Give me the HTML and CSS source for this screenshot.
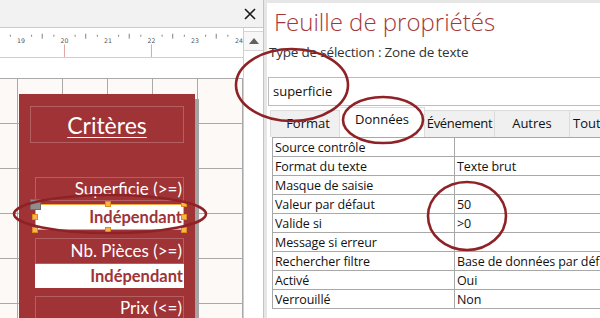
FILE: index.html
```html
<!DOCTYPE html>
<html lang="fr">
<head>
<meta charset="utf-8">
<title>Feuille de propriétés</title>
<link rel="stylesheet" href="styles.css">
</head>
<body>
<div class="app">
  <section class="designer">
    <div class="topbar">
      <svg class="close" width="12" height="12" viewBox="0 0 12 12"><path d="M1 1L11 11M11 1L1 11" stroke="#1a1a1a" stroke-width="1.6"/></svg>
    </div>
    <div class="design-body">
      <div class="canvas-col">
        <svg class="ruler" width="243" height="30" viewBox="0 0 243 30">
          <g stroke="#7a7a7a" stroke-width="1">
            <line x1="6.5" y1="7" x2="6.5" y2="9"/>
            <line x1="28.5" y1="7" x2="28.5" y2="9"/><line x1="39.5" y1="6" x2="39.5" y2="11"/><line x1="51.5" y1="7" x2="51.5" y2="9"/>
            <line x1="73.5" y1="7" x2="73.5" y2="9"/><line x1="84.5" y1="6" x2="84.5" y2="11"/><line x1="96.5" y1="7" x2="96.5" y2="9"/>
            <line x1="118.5" y1="7" x2="118.5" y2="9"/><line x1="129.5" y1="6" x2="129.5" y2="11"/><line x1="141.5" y1="7" x2="141.5" y2="9"/>
            <line x1="163.5" y1="7" x2="163.5" y2="9"/><line x1="174.5" y1="6" x2="174.5" y2="11"/><line x1="186.5" y1="7" x2="186.5" y2="9"/>
            <line x1="208.5" y1="7" x2="208.5" y2="9"/><line x1="219.5" y1="6" x2="219.5" y2="11"/><line x1="231.5" y1="7" x2="231.5" y2="9"/>
          </g>
          <g class="ruler-num" fill="#555" font-size="6.5" text-anchor="middle">
            <text x="17.5" y="15">19</text>
            <text x="62.5" y="15">20</text>
            <text x="107.5" y="15">21</text>
            <text x="152.5" y="15">22</text>
            <text x="197.5" y="15">23</text>
            <text x="243" y="15">24</text>
          </g>
          <g stroke="#e0a0a0" stroke-width="1">
            <line x1="62.5" y1="17" x2="62.5" y2="30"/>
            <line x1="152.5" y1="17" x2="152.5" y2="30"/>
          </g>
        </svg>
        <div class="band"></div>
        <div class="grid">
          <div class="form">
            <div class="title-box"><span class="title-text">Critères</span></div>
            <div class="lbl lbl-first">Superficie (&gt;=)</div>
            <div class="field field-selected">
              Indépendant
              <span class="move-handle"></span>
              <span class="h h-tm"></span><span class="h h-tr"></span>
              <span class="h h-ml"></span><span class="h h-mr"></span>
              <span class="h h-bl"></span><span class="h h-bm"></span><span class="h h-br"></span>
            </div>
            <div class="lbl lbl-second">Nb. Pièces (&gt;=)</div>
            <div class="field field-plain">Indépendant</div>
            <div class="lbl lbl-third">Prix (&lt;=)</div>
          </div>
        </div>
      </div>
      <div class="vscroll">
        <div class="up-btn">
          <svg width="10" height="6" viewBox="0 0 10 6"><path d="M0 6L5 0L10 6Z" fill="#606060"/></svg>
        </div>
      </div>
    </div>
  </section>
  <div class="splitter"></div>
  <section class="props">
    <h1 class="props-title">Feuille de propriétés</h1>
    <div class="sel-type">Type de sélection : Zone de texte</div>
    <div class="combo">superficie</div>
    <div class="tabs">
      <div class="tab tab-format">Format</div>
      <div class="tab tab-active">Données</div>
      <div class="tab tab-event">Événement</div>
      <div class="tab tab-other">Autres</div>
      <div class="tab tab-all">Toutes</div>
    </div>
    <table class="sheet">
      <tr><td class="k">Source contrôle</td><td class="v"></td></tr>
      <tr><td class="k">Format du texte</td><td class="v">Texte brut</td></tr>
      <tr><td class="k">Masque de saisie</td><td class="v"></td></tr>
      <tr><td class="k">Valeur par défaut</td><td class="v">50</td></tr>
      <tr><td class="k">Valide si</td><td class="v">&gt;0</td></tr>
      <tr><td class="k">Message si erreur</td><td class="v"></td></tr>
      <tr><td class="k">Rechercher filtre</td><td class="v">Base de données par défaut</td></tr>
      <tr><td class="k">Activé</td><td class="v">Oui</td></tr>
      <tr><td class="k">Verrouillé</td><td class="v">Non</td></tr>
    </table>
  </section>
</div>
<svg class="marks" width="600" height="318" viewBox="0 0 600 318">
  <g fill="none" stroke="#8f2226" stroke-width="2.6">
    <ellipse cx="110" cy="214" rx="96" ry="19"/>
    <ellipse cx="292" cy="85" rx="56" ry="36"/>
    <ellipse cx="383" cy="120" rx="40" ry="23"/>
    <ellipse cx="467" cy="216" rx="39" ry="34"/>
  </g>
</svg>
</body>
</html>
```

FILE: styles.css
```css
* { box-sizing: border-box; }

html, body {
  margin: 0;
  padding: 0;
}

body {
  width: 600px;
  height: 318px;
  overflow: hidden;
  position: relative;
  font-family: "Open Sans", "Noto Sans", sans-serif;
  background: #e6e6e6;
}

.app {
  display: flex;
  width: 600px;
  height: 318px;
}

/* ---------- left: form designer ---------- */
.designer {
  width: 263px;
  flex: none;
  display: flex;
  flex-direction: column;
  background: #ffffff;
}

.topbar {
  height: 28px;
  flex: none;
  background: #f2f2f2;
  border-bottom: 1px solid #c9c9c9;
  display: flex;
  align-items: center;
  justify-content: flex-end;
  padding-right: 7px;
}

.close { display: block; }

.design-body {
  flex: 1;
  display: flex;
  min-height: 0;
}

.canvas-col {
  width: 243px;
  flex: none;
  display: flex;
  flex-direction: column;
  overflow: hidden;
}

.ruler {
  display: block;
  flex: none;
  background: #ffffff;
  border-bottom: 1px solid #cfcfcf;
}

.ruler-num { font-family: "DejaVu Sans", sans-serif; }

.band {
  height: 20px;
  flex: none;
  background: #ffffff;
}

.grid {
  flex: 1;
  background-color: #fdf9f6;
  background-image:
    linear-gradient(to right, #a9a9a9 1px, transparent 1px),
    linear-gradient(to bottom, #a9a9a9 1px, transparent 1px);
  background-size: 45px 45px;
  background-position: 17px 0, 0 0;
  padding: 16px 0 0 19px;
  overflow: hidden;
}

.form {
  width: 176px;
  height: 260px;
  background: #9f3336;
  box-shadow: 4px 5px 0 0 #a3a3a3;
  padding-top: 12px;
  font-family: Lato, "Open Sans", sans-serif;
  color: #ffffff;
}

.title-box {
  margin-left: 11px;
  width: 154px;
  height: 37px;
  border: 1px solid rgba(255, 255, 255, 0.22);
  display: flex;
  align-items: center;
  justify-content: center;
}

.title-text {
  font-size: 23px;
  text-decoration: underline;
  text-decoration-thickness: 1px;
  text-underline-offset: 3px;
  line-height: 1;
  padding-top: 1px;
}

.lbl {
  margin-left: 16px;
  width: 149px;
  height: 24px;
  border: 1px solid rgba(255, 255, 255, 0.22);
  font-size: 17px;
  line-height: 22px;
  text-align: right;
  padding-right: 1px;
  white-space: nowrap;
}

.lbl-first { margin-top: 34px; }
.lbl-second { margin-top: 8px; height: 26px; line-height: 24px; }
.lbl-third { margin-top: 8px; }

.field {
  margin-left: 16px;
  width: 149px;
  background: #ffffff;
  color: #9f3336;
  font-weight: 700;
  font-size: 16.5px;
  text-align: right;
  white-space: nowrap;
  padding-right: 1px;
}

.field-selected {
  position: relative;
  margin-top: 3px;
  height: 26px;
  line-height: 24px;
  border: 1px solid #f2a838;
}

.field-plain {
  margin-top: 0;
  height: 24px;
  line-height: 24px;
}

.move-handle {
  position: absolute;
  left: -6px;
  top: -6px;
  width: 11px;
  height: 11px;
  background: #8e8e8e;
  border: 1px solid #6f6f6f;
}

.h {
  position: absolute;
  width: 6px;
  height: 6px;
  background: #f6b54e;
  border: 1px solid #e08a1a;
}
.h-tm { top: -4px; left: 69px; }
.h-tr { top: -4px; right: -4px; }
.h-ml { top: 9px; left: -4px; }
.h-mr { top: 9px; right: -4px; }
.h-bl { bottom: -4px; left: -4px; }
.h-bm { bottom: -4px; left: 69px; }
.h-br { bottom: -4px; right: -4px; }

.vscroll {
  width: 20px;
  flex: none;
  background: #ffffff;
  border-left: 1px solid #cfcfcf;
  padding-top: 3px;
}

.up-btn {
  height: 20px;
  border-top: 1px solid #d6d6d6;
  border-bottom: 1px solid #d6d6d6;
  display: flex;
  align-items: center;
  justify-content: center;
  background: #f7f7f7;
}
.up-btn svg { display: block; }

.splitter {
  width: 4px;
  flex: none;
  background: #e6e6e6;
  border-left: 1px solid #c4c4c4;
}

/* ---------- right: property sheet ---------- */
.props {
  flex: 1;
  margin-top: 3px;
  background: #ffffff;
  overflow: hidden;
  color: #111111;
}

.props-title {
  margin: 0 0 0 7px;
  height: 38px;
  font-size: 24px;
  font-weight: 300;
  line-height: 38px;
  color: #a4373a;
  white-space: nowrap;
}

.sel-type {
  margin-left: 2px;
  height: 22px;
  font-size: 13.5px;
  line-height: 22px;
  color: #333333;
  letter-spacing: -0.2px;
}

.combo {
  margin-top: 14px;
  margin-left: 1px;
  width: 340px;
  height: 29px;
  border: 1px solid #bdbdbd;
  font-size: 13px;
  line-height: 27px;
  padding-left: 4px;
}

.tabs {
  margin-top: 1px;
  margin-left: 3px;
  height: 30px;
  display: flex;
  align-items: flex-end;
  white-space: nowrap;
}

.tab {
  height: 27px;
  background: #f0f0f0;
  border: 1px solid #dcdcdc;
  border-bottom: none;
  border-left: none;
  font-size: 13px;
  line-height: 25px;
  text-align: center;
  flex: none;
}

.tab-format { width: 70px; border-left: 1px solid #dcdcdc; padding-left: 6px; }
.tab-active {
  width: 85px;
  height: 30px;
  background: #ffffff;
  line-height: 23px;
}
.tab-event { width: 70px; letter-spacing: -0.3px; }
.tab-other { width: 75px; }
.tab-all { width: 70px; text-align: left; padding-left: 3px; }

.sheet {
  margin-left: 5px;
  border-collapse: collapse;
  width: 360px;
  font-size: 12.5px;
  letter-spacing: -0.1px;
}

.sheet td {
  height: 19px;
  padding: 0 2px;
  border: 1px solid #a8a8a8;
  line-height: 17px;
  white-space: nowrap;
}

.sheet td.k { width: 182px; }

/* ---------- annotations ---------- */
.marks {
  position: absolute;
  left: 0;
  top: 0;
  pointer-events: none;
}
```
